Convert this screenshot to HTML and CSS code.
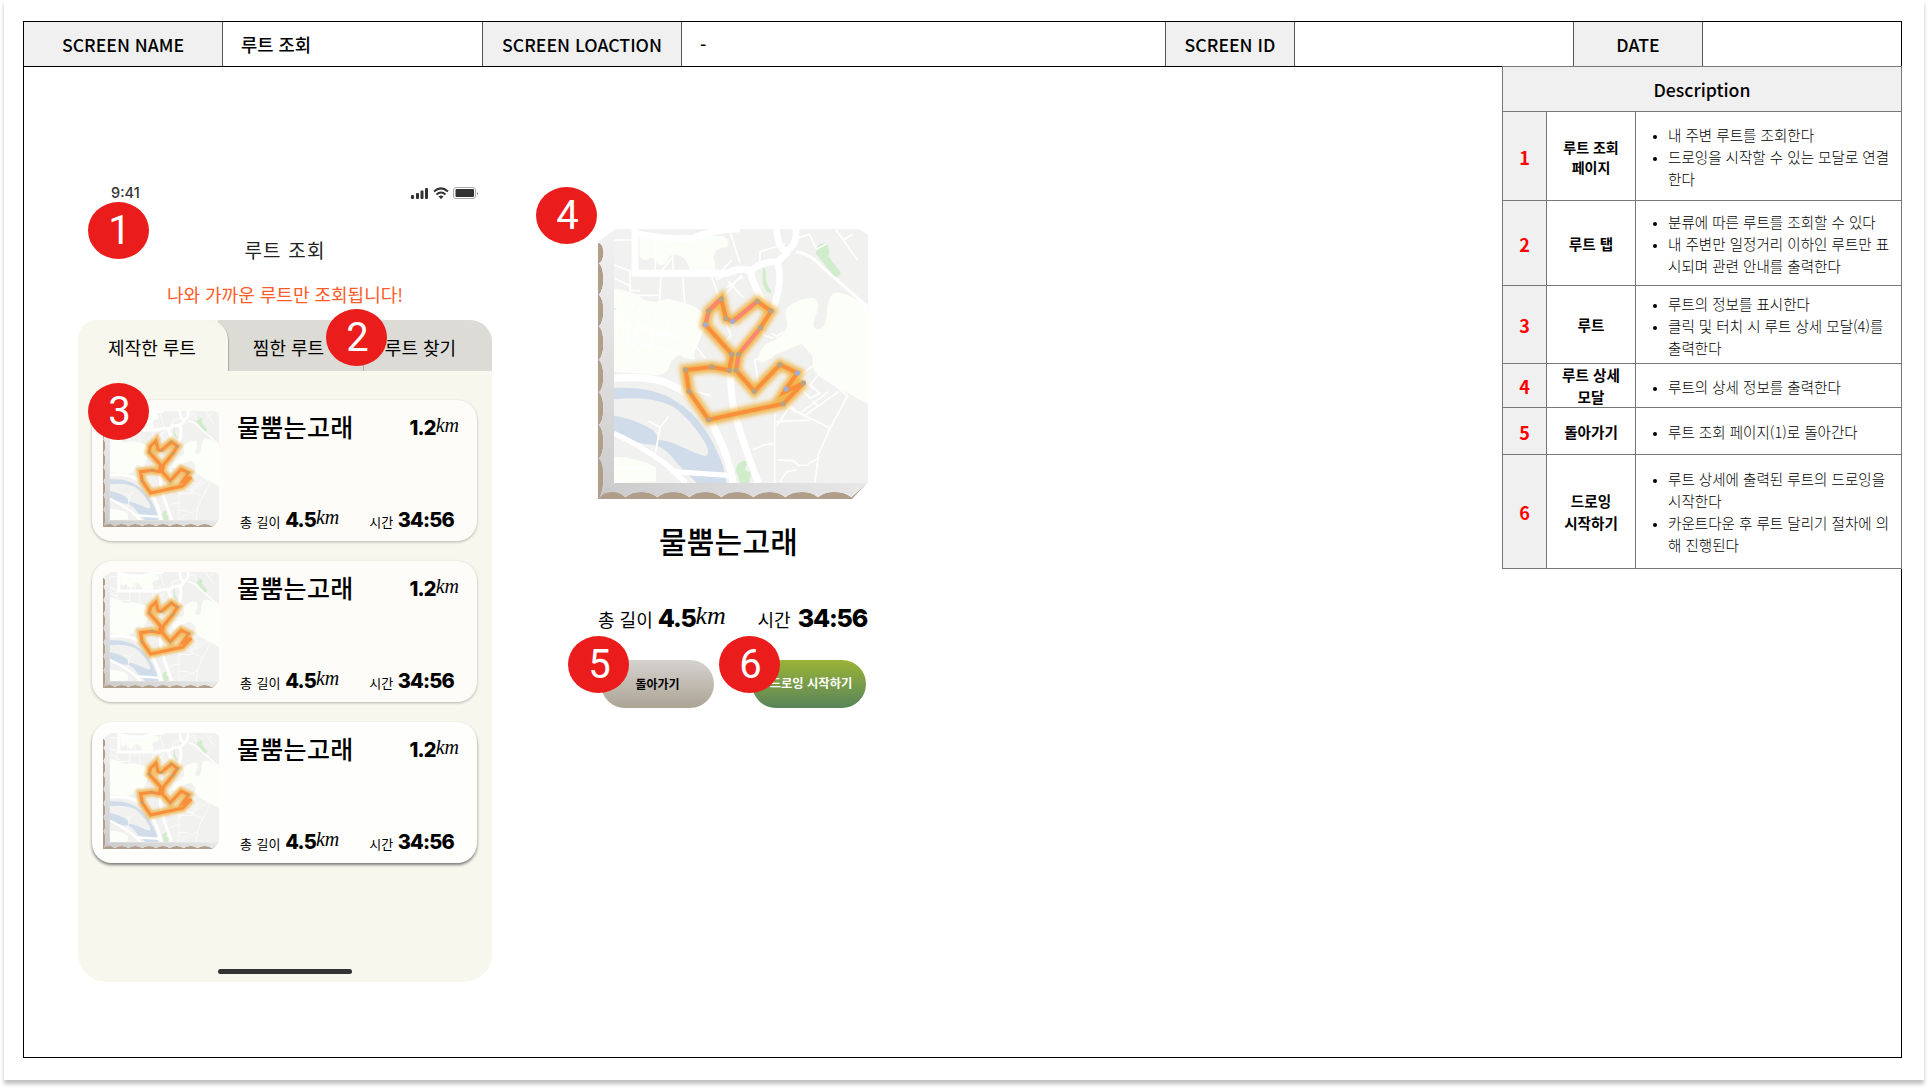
FILE: index.html
```html
<!DOCTYPE html>
<html lang="ko">
<head>
<meta charset="utf-8">
<title>루트 조회</title>
<link rel="stylesheet" href="styles.css">
</head>
<body>
<svg width="0" height="0" class="defs">
  <defs>
    <linearGradient id="side" x1="0" y1="0" x2="0" y2="1"><stop offset="0" stop-color="#f2f2f2"/><stop offset="1" stop-color="#cbcbcb"/></linearGradient>
    <linearGradient id="base" x1="0" y1="0" x2="1" y2="0"><stop offset="0" stop-color="#cbcbcb"/><stop offset="1" stop-color="#e8e8e8"/></linearGradient>
    <clipPath id="face"><path d="M102 61L106 57H835Q850 62 864 76V819H102Z"/></clipPath>
    <filter id="glow" x="-20%" y="-20%" width="140%" height="140%"><feGaussianBlur stdDeviation="7"/></filter>
    <path id="trail" d="M458 334L532 274L573 303L542 353L476 433L468 481L523 544L600 464L652 489L618 537L611 548L670 519L610 581L386 629L327 544L317 480L395 471L448 481L456 433L376 344L386 303L424 267L438 326L458 334"/>
    <g id="terrain">
      <path fill="#b09e8a" d="M54 98Q70 100 70 130Q70 152 57 160Q70 172 70 208Q70 240 57 254Q70 266 70 302Q70 336 57 349Q70 362 70 398Q70 436 57 449Q70 462 70 500Q70 534 57 547Q70 560 70 598Q70 632 57 645Q70 658 70 698Q70 732 57 745Q70 758 70 790V820L100 840Q120 846 136 862Q154 846 184 846Q214 846 232 862Q250 846 280 846Q310 846 328 862Q346 846 376 846Q406 846 424 862Q442 846 472 846Q502 846 520 862Q538 846 568 846Q598 846 616 862Q634 846 666 846Q696 846 714 862Q732 846 762 846Q796 846 814 862L861 820L816 867H54Z"/>
      <path fill="url(#side)" d="M102 60L54 95Q70 100 70 130Q70 152 57 160Q70 172 70 208Q70 240 57 254Q70 266 70 302Q70 336 57 349Q70 362 70 398Q70 436 57 449Q70 462 70 500Q70 534 57 547Q70 560 70 598Q70 632 57 645Q70 658 70 698Q70 732 57 745Q70 758 70 800Q70 840 57 864L102 819Z"/>
      <path fill="url(#base)" d="M102 819L56 865Q70 846 96 846Q120 846 136 862Q154 846 184 846Q214 846 232 862Q250 846 280 846Q310 846 328 862Q346 846 376 846Q406 846 424 862Q442 846 472 846Q502 846 520 862Q538 846 568 846Q598 846 616 862Q634 846 666 846Q696 846 714 862Q732 846 762 846Q796 846 814 862L862 819Z"/>
      <g clip-path="url(#face)" fill="none" stroke="#fff" stroke-linejoin="round">
        <rect x="102" y="57" width="762" height="762" fill="#f1f1f0" stroke="none"/>
        <g fill="#fcfef8" stroke="none">
          <path d="M178 80L430 78Q455 95 440 112Q405 112 400 140Q410 165 405 180H330Q315 135 290 135Q270 125 262 155Q245 175 230 160Q225 132 200 150Q180 150 178 130Z"/>
          <path d="M102 236Q150 240 180 262Q215 286 262 266L330 284Q378 300 376 340L352 406Q340 425 345 447Q320 450 300 434Q270 445 265 480Q240 505 200 492L102 486Z"/>
          <path d="M868 300Q800 240 760 250Q740 270 740 320Q735 360 710 358Q690 350 710 310Q722 270 700 264Q670 262 630 285Q608 300 622 340Q620 376 570 396Q545 405 532 448Q545 470 585 435Q640 410 665 402L700 440Q690 480 715 494L770 530L864 583Z"/>
          <path d="M102 740Q170 740 228 772V815L102 819Z"/>
        </g>
        <g fill="#d0eccb" stroke="none"><path d="M708 118Q720 90 742 105Q752 120 745 138Q765 168 782 185Q780 204 762 198L708 132Z"/><path d="M549 173Q560 175 557 205Q562 230 573 240V252Q553 245 547 215Z"/><path d="M470 770Q480 750 500 753V765Q488 780 505 785L515 782L508 819H480Q475 795 468 785Z"/><path d="M102 293L109 297L102 304Z"/></g>
        <path fill="#d0dce9" stroke="none" d="M102 534Q220 528 290 575Q380 630 430 770L440 819H350L290 758Q260 715 225 705Q170 705 102 665V617Q150 622 210 655Q230 665 234 690Q265 690 305 710Q370 740 378 738Q394 728 370 690Q330 625 280 590Q215 555 102 568Z"/>
        <path stroke-width="22" d="M102 505Q220 494 285 530Q370 570 415 680Q445 740 460 819"/>
        <path stroke-width="16" d="M102 670Q180 705 255 760L318 819M280 785L455 797"/>
        <path stroke-width="21" d="M165 57V190H440Q480 170 510 182Q520 230 560 290M452 485Q450 560 470 630Q490 700 535 819"/>
        <path stroke-width="20" d="M160 68Q250 90 340 84Q390 60 480 57M505 195Q530 155 590 155Q610 200 585 280L548 350M590 57Q595 115 615 122Q650 115 648 57M590 158L625 125"/>
        <path stroke-width="9" d="M648 125Q690 130 725 170L864 292"/>
        <path stroke-width="5" d="M226 90V183M275 90L280 180M275 145L240 188M452 70L480 160M540 160V125L615 102M642 88L688 73L710 118L738 102M765 55L790 90L833 151M790 90L818 73M102 90H160M102 165L150 183V240M105 205L155 230M150 242H180M152 256H236M160 260V290M242 200L238 290M308 200L314 280M395 200L420 270L445 360L453 375L430 400M410 210L450 185M440 232L490 200M430 260L485 195M445 215L490 262M455 150L405 205M548 355L550 375L580 385M575 370L590 380L610 365M345 405L375 445M375 345L345 415M524 450L535 520M524 450L590 420M640 510L710 460M650 520L690 565L720 550L690 525L715 494L770 530L803 558L750 655L715 735L705 819M610 585L750 655M584 608V819M550 705L584 700M550 705L518 720M584 635L690 630M590 750L640 752L655 766L680 765L712 745M625 595L590 650M610 580L645 598M660 610L745 545M670 620L775 545M697 573L715 590M600 815L620 785L650 780M205 632L240 652L265 620M240 652L225 735M102 773H205M330 540L392 557M102 300L145 330V400L180 425M102 340L245 375M120 265L105 400M180 290L165 390M230 300L205 430M275 300L250 390M140 390L300 430M170 345L300 385"/>
      </g>
    </g>
    <symbol id="tile" viewBox="54 57 810 810">
      <use href="#terrain"/>
      <use href="#trail" fill="none" stroke="#f0b03c" stroke-width="32" filter="url(#glow)" opacity=".9"/>
      <use href="#trail" fill="none" stroke="#f98f3d" stroke-width="12"/>
      <path fill="none" stroke="#fc8577" stroke-width="10" d="M463 331L528 277M537 358L485 422M387 300L417 270M381 333L383 312M474 446L469 468"/>
      <g fill="#b8a384"><circle cx="532" cy="274" r="8"/><circle cx="573" cy="303" r="8"/><circle cx="542" cy="353" r="8"/><circle cx="476" cy="433" r="8"/><circle cx="468" cy="481" r="8"/><circle cx="523" cy="544" r="8"/><circle cx="600" cy="464" r="8"/><circle cx="670" cy="519" r="8"/><circle cx="610" cy="581" r="8"/><circle cx="386" cy="629" r="8"/><circle cx="327" cy="544" r="8"/><circle cx="317" cy="480" r="8"/><circle cx="395" cy="471" r="8"/><circle cx="448" cy="481" r="8"/><circle cx="456" cy="433" r="8"/><circle cx="386" cy="303" r="8"/><circle cx="424" cy="267" r="8"/><circle cx="438" cy="326" r="8"/></g>
      <g fill="#a2add0"><circle cx="458" cy="334" r="8"/><circle cx="376" cy="344" r="8"/><circle cx="652" cy="489" r="8"/><circle cx="618" cy="537" r="8"/></g>
    </symbol>
    <symbol id="tile-small" viewBox="54 57 810 810">
      <use href="#terrain"/>
      <use href="#trail" fill="none" stroke="#efb040" stroke-width="58" filter="url(#glow)" opacity=".75"/>
      <use href="#trail" fill="none" stroke="#f98f3d" stroke-width="22"/>
      <g fill="#b5a27d"><circle cx="532" cy="274" r="9"/><circle cx="573" cy="303" r="9"/><circle cx="542" cy="353" r="9"/><circle cx="523" cy="544" r="9"/><circle cx="652" cy="489" r="9"/><circle cx="327" cy="544" r="9"/><circle cx="395" cy="471" r="9"/><circle cx="376" cy="344" r="9"/><circle cx="458" cy="334" r="9"/></g>
    </symbol>
  </defs>
</svg>

<main class="paper">
  <header class="meta">
    <div class="label">SCREEN NAME</div><div class="value">루트 조회</div>
    <div class="label">SCREEN LOACTION</div><div class="value">-</div>
    <div class="label">SCREEN ID</div><div class="value"></div>
    <div class="label">DATE</div><div class="value"></div>
  </header>
  <div class="board">
    <section class="phone">
      <span class="badge b1">1</span>
      <div class="status"><span class="clock">9:41</span>
        <svg width="68" height="14" viewBox="0 0 68 14"><g fill="#333"><rect x="0" y="8" width="3" height="4" rx="1"/><rect x="5" y="6" width="3" height="6" rx="1"/><rect x="9.500" y="3.500" width="3" height="8.500" rx="1"/><rect x="14" y="1" width="3" height="11" rx="1"/><rect x="44.500" y="2" width="18.500" height="8" rx="1"/><path d="M66 5v3q1.500-1.500 0-3z"/><path d="M27.500 9.300L30 12.300L32.500 9.300Q30 7.600 27.500 9.300Z"/></g><rect x="42.500" y=".5" width="22" height="11" rx="2.500" fill="none" stroke="#aaa"/><path d="M23 4.500Q30-1.800 37 4.500M25.500 7.500Q30 3.600 34.500 7.500" fill="none" stroke="#333" stroke-width="2"/></svg>
      </div>
      <h1>루트 조회</h1>
      <p class="notice">나와 가까운 루트만 조회됩니다!</p>
      <div class="panel">
        <nav class="tabs"><span class="tab active">제작한 루트</span><span class="tab second">찜한 루트</span><span class="tab third">루트 찾기</span></nav>
        <span class="badge b2">2</span>
        <div class="cards">
          <article class="card c1"><span class="badge b3">3</span><svg class="thumb"><use href="#tile-small"/></svg>
            <div class="info"><div class="line"><h2>물뿜는고래</h2><span class="dist"><b>1.2</b><i>km</i></span></div><div class="line foot"><span class="len">총 길이 <b>4.5</b><i>km</i></span><span class="time">시간 <b>34:56</b></span></div></div></article>
          <article class="card c2"><svg class="thumb"><use href="#tile-small"/></svg>
            <div class="info"><div class="line"><h2>물뿜는고래</h2><span class="dist"><b>1.2</b><i>km</i></span></div><div class="line foot"><span class="len">총 길이 <b>4.5</b><i>km</i></span><span class="time">시간 <b>34:56</b></span></div></div></article>
          <article class="card c3"><svg class="thumb"><use href="#tile-small"/></svg>
            <div class="info"><div class="line"><h2>물뿜는고래</h2><span class="dist"><b>1.2</b><i>km</i></span></div><div class="line foot"><span class="len">총 길이 <b>4.5</b><i>km</i></span><span class="time">시간 <b>34:56</b></span></div></div></article>
        </div>
        <div class="home"></div>
      </div>
    </section>

    <section class="detail">
      <span class="badge b4">4</span>
      <svg class="map"><use href="#tile"/></svg>
      <h2>물뿜는고래</h2>
      <div class="stats"><span class="len">총 길이 <b>4.5</b><i>km</i></span><span class="time">시간 <b>34:56</b></span></div>
      <div class="actions">
        <div class="btn back">돌아가기<span class="badge b5">5</span></div>
        <div class="btn go">드로잉 시작하기<span class="badge b6">6</span></div>
      </div>
    </section>

    <aside class="desc">
      <h3>Description</h3>
      <div class="row r1"><b>1</b><strong class="small">루트 조회<br>페이지</strong><ul><li>내 주변 루트를 조회한다</li><li>드로잉을 시작할 수 있는 모달로 연결<br>한다</li></ul></div>
      <div class="row r2"><b>2</b><strong>루트 탭</strong><ul><li>분류에 따른 루트를 조회할 수 있다</li><li>내 주변만 일정거리 이하인 루트만 표<br>시되며 관련 안내를 출력한다</li></ul></div>
      <div class="row r3"><b>3</b><strong>루트</strong><ul><li>루트의 정보를 표시한다</li><li>클릭 및 터치 시 루트 상세 모달(4)를<br>출력한다</li></ul></div>
      <div class="row r4"><b>4</b><strong>루트 상세<br>모달</strong><ul><li>루트의 상세 정보를 출력한다</li></ul></div>
      <div class="row r5"><b>5</b><strong>돌아가기</strong><ul><li>루트 조회 페이지(1)로 돌아간다</li></ul></div>
      <div class="row r6"><b>6</b><strong>드로잉<br>시작하기</strong><ul><li>루트 상세에 출력된 루트의 드로잉을<br>시작한다</li><li>카운트다운 후 루트 달리기 절차에 의<br>해 진행된다</li></ul></div>
    </aside>
  </div>
</main>
</body>
</html>
```
FILE: styles.css
```css
* { box-sizing: border-box; margin: 0; padding: 0; }
body { height: 1088px; background: #fff; overflow: hidden; font-family: "Noto Sans CJK KR", sans-serif; color: #000; }
.defs { display: block; height: 0; }
.paper { width: 1920px; height: 1080px; margin-left: 4px; padding: 21px 22px 22px 19px; background: #fff; box-shadow: 0 4px 4px rgba(0, 0, 0, .25); display: flex; flex-direction: column; }

.meta { height: 46px; flex: none; display: grid; grid-template-columns: 199px 260px 199px 484px 129px 279px 129px 1fr; border: 1px solid #000; font-size: 17.700px; font-weight: 500; }
.meta > div { display: flex; align-items: center; border-right: 1px solid #555; }
.meta > div:last-child { border-right: 0; }
.label { justify-content: center; background: #f0f0f0; }
.value { padding-left: 18px; }

.board { flex: 1; display: flex; align-items: flex-start; border: 1px solid #000; border-top: 0; }

.phone { position: relative; width: 414px; margin: 116px 0 0 54px; }
.status { display: flex; justify-content: space-between; height: 18px; padding: 0 13px 0 33px; }
.status svg { margin-top: 4px; }
.clock { font: 500 14.500px/19px Inter, sans-serif; color: #333; }
.phone h1 { height: 28px; margin-top: 35px; text-align: center; font-size: 19px; line-height: 28px; font-weight: 400; color: #222; letter-spacing: 1.200px; }
.notice { margin-top: 16px; height: 28px; text-align: center; font-size: 18px; line-height: 28px; font-weight: 400; color: #fc5a26; }
.panel { position: relative; height: 662px; margin-top: 12px; background: #f8f7ee; border-radius: 22px 22px 28px 28px; display: flex; flex-direction: column; }
.tabs { display: grid; grid-template-columns: 150px 136px 128px; height: 51px; background: linear-gradient(90deg, #f8f7ee 140px, #dcdbd6 140px); border-radius: 20px 22px 0 0; }
.tab { display: flex; align-items: center; justify-content: center; font-size: 18px; font-weight: 400; padding-top: 2px; }
.active { background: #f8f7ee; border-radius: 20px 20px 0 0; box-shadow: 1px 1px 1px #aaa; clip-path: inset(0 -2px 0 0); padding-right: 2px; }
.second { border-right: 1px solid #aaa; padding-right: 14px; }
.third { padding-right: 15px; }
.cards { display: flex; flex-direction: column; gap: 20px; padding: 29px 15px 0 14px; }
.card { position: relative; display: flex; height: 141px; padding: 11px 23px 0 11px; border-radius: 20px; background: #fdfcf8; box-shadow: 0 1px 3px rgba(0, 0, 0, .28); }
.c3 { background: #fefefd; box-shadow: 0 2px 3px rgba(0, 0, 0, .5); }
.thumb { width: 116px; height: 116px; flex: none; }
.info { flex: 1; margin-left: 18px; display: flex; flex-direction: column; }
.line { display: flex; justify-content: space-between; align-items: center; height: 32px; white-space: nowrap; }
.card h2 { font-size: 25px; line-height: 32px; font-weight: 500; letter-spacing: .3px; position: relative; top: -1px; }
.dist { margin-right: -5px; padding-top: 2px; }
.foot { margin-top: 61px; padding-left: 3px; height: 32px; }
.len, .time { font-size: 13px; font-weight: 400; white-space: nowrap; word-spacing: 1px; }
.len b, .time b, .dist b { font: 800 20px/30px Inter, sans-serif; letter-spacing: -.8px; }
.dist i, .len i { font: italic 20px/20px "Liberation Serif", serif; position: relative; top: -3px; }
.home { width: 134px; height: 5px; margin: auto auto 8px; border-radius: 3px; background: #333; }

.detail { position: relative; width: 270px; margin: 162px 0 0 106px; }
.map { display: block; width: 270px; height: 270px; }
.detail h2 { height: 44px; margin-top: 19px; padding-right: 9px; text-align: center; font-size: 30px; line-height: 44px; font-weight: 500; letter-spacing: .2px; }
.stats { height: 36px; margin-top: 38px; padding-right: 1px; display: flex; justify-content: space-between; align-items: center; }
.stats .len, .stats .time { font-size: 18px; word-spacing: 0; }
.stats .len b, .stats .time b { font-size: 25px; letter-spacing: -1.200px; }
.stats .time b { margin-left: 2px; }
.stats i { font-size: 26px; }
.actions { display: flex; justify-content: space-between; margin-top: 24px; padding: 0 2px 0 3px; }
.btn { position: relative; width: 113px; height: 48px; border-radius: 24px; display: flex; align-items: center; justify-content: center; font-size: 12px; font-weight: 700; white-space: nowrap; padding-bottom: 2px; }
.back { background: linear-gradient(#d5d3cf, #aca494); }
.go { width: 114px; color: #fff; background: linear-gradient(#9ab436, #58845a); padding-left: 4px; font-size: 12.300px; }

.badge { position: absolute; z-index: 2; display: flex; align-items: center; justify-content: center; width: 61px; height: 57px; padding-left: 2px; border-radius: 50%; background: #eb1c1c; color: #fff; font: 400 40px/57px Roboto, sans-serif; }
.b1 { left: 10px; top: 19px; }
.b2 { left: 248px; top: -11px; }
.b3 { left: -4px; top: -17px; }
.b4 { left: -62px; top: -42px; }
.b5 { left: -33px; top: -24px; }
.b6 { left: -33px; top: -24px; }

.desc { width: 400px; margin: -1px -1px 0 auto; border: 1px solid #777; background: #fff; }
.desc h3 { height: 45px; line-height: 44px; text-align: center; background: #f0f0f0; border-bottom: 1px solid #777; font-size: 17.700px; font-weight: 500; }
.row { display: grid; grid-template-columns: 44px 89px 1fr; grid-template-rows: 100%; border-bottom: 1px solid #777; }
.row:last-child { border-bottom: 0; }
.row > b, .row > strong { display: flex; align-items: center; justify-content: center; text-align: center; border-right: 1px solid #777; }
.row > b { background: #f0f0f0; color: #f00; font-size: 18px; padding-top: 1px; }
.row > strong { font-size: 14.600px; line-height: 22px; font-weight: 700; padding-top: 1px; }
.row > .small { font-size: 14px; line-height: 20px; }
.row ul { align-self: center; padding: 2px 0 0 32px; font-size: 14.550px; line-height: 22px; font-weight: 300; white-space: nowrap; }
.row li::marker { font-size: 11px; }
.r1 { height: 89px; }
.r2 { height: 85px; }
.r3 { height: 78px; }
.r4 { height: 44px; }
.r5 { height: 47px; }
.r6 { height: 113px; }
.r6 ul { padding-top: 0; }
```
